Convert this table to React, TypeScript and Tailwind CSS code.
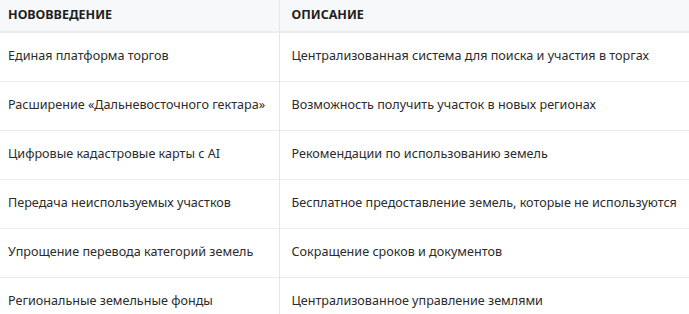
const rows = [
  ['Единая платформа торгов', 'Централизованная система для поиска и участия в торгах'],
  ['Расширение «Дальневосточного гектара»', 'Возможность получить участок в новых регионах'],
  ['Цифровые кадастровые карты с AI', 'Рекомендации по использованию земель'],
  ['Передача неиспользуемых участков', 'Бесплатное предоставление земель, которые не используются'],
  ['Упрощение перевода категорий земель', 'Сокращение сроков и документов'],
  ['Региональные земельные фонды', 'Централизованное управление землями'],
]

export default function App() {
  return (
    <div
      className="w-[689px] h-[314px] overflow-hidden bg-white text-[12.6px] text-[#2b2b2b]"
      style={{ fontFamily: '"Noto Sans", "Open Sans", sans-serif' }}
    >
      <table className="w-[720px] border-collapse">
        <thead>
          <tr className="h-[32px] bg-[#f7f8fa] border-b-2 border-[#ebebf0]">
            <th className="w-[279px] pl-2 text-left font-bold text-[12.5px] text-[#1f1f1f] border-r border-[#e6e6ea]">
              НОВОВВЕДЕНИЕ
            </th>
            <th className="pl-3 text-left font-bold text-[12.5px] text-[#1f1f1f]">ОПИСАНИЕ</th>
          </tr>
        </thead>
        <tbody>
          {rows.map(([a, b]) => (
            <tr key={a} className="h-[49px] border-b border-[#ebebf0]">
              <td className="pl-2 whitespace-nowrap border-r border-[#e6e6ea]">{a}</td>
              <td className="pl-3 whitespace-nowrap">{b}</td>
            </tr>
          ))}
        </tbody>
      </table>
    </div>
  )
}
